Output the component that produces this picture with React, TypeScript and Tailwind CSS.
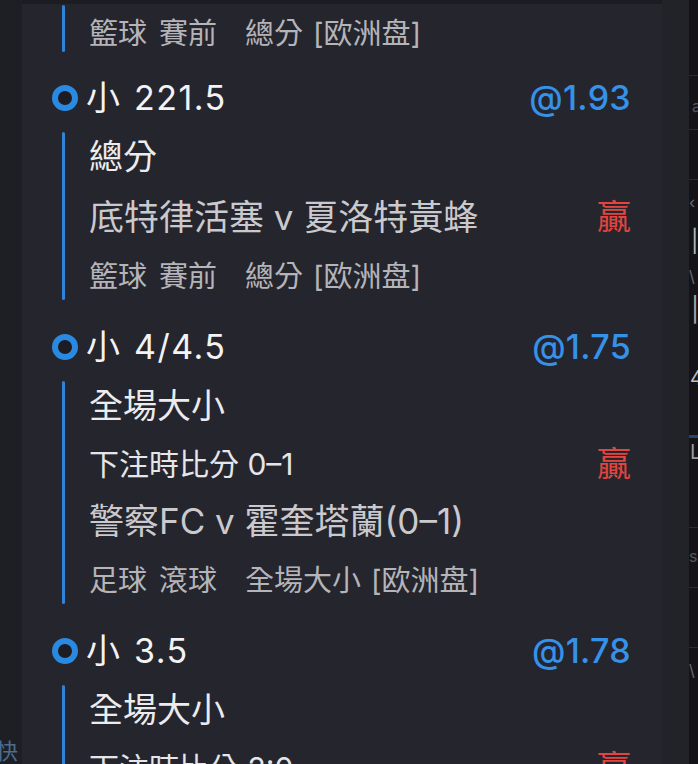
import React from "react";

type Row =
  | { kind: "label"; text: string }
  | { kind: "team"; text: string; win?: boolean }
  | { kind: "score"; text: string; win?: boolean }
  | { kind: "meta"; a: string; b: string; c: string };

type Section = { title: string; num: string; odds: string; rows: Row[] };

const sections: Section[] = [
  {
    title: "小",
    num: "221.5",
    odds: "@1.93",
    rows: [
      { kind: "label", text: "總分" },
      { kind: "team", text: "底特律活塞 v 夏洛特黃蜂", win: true },
      { kind: "meta", a: "籃球", b: "賽前", c: "總分" },
    ],
  },
  {
    title: "小",
    num: "4/4.5",
    odds: "@1.75",
    rows: [
      { kind: "label", text: "全場大小" },
      { kind: "score", text: "下注時比分 0–1", win: true },
      { kind: "team", text: "警察FC v 霍奎塔蘭(0–1)" },
      { kind: "meta", a: "足球", b: "滾球", c: "全場大小" },
    ],
  },
  {
    title: "小",
    num: "3.5",
    odds: "@1.78",
    rows: [
      { kind: "label", text: "全場大小" },
      { kind: "score", text: "下注時比分 2:0", win: true },
      { kind: "team", text: "" },
    ],
  },
];

function Win() {
  return <span className="ml-auto text-[34px] leading-none text-[#e2453f]">贏</span>;
}

function Meta({ a, b, c }: { a: string; b: string; c: string }) {
  return (
    <div className="h-[59px] flex items-center text-[29px] leading-none text-[#b4b4b9]">
      <span>{a}</span>
      <span className="ml-[12px]">{b}</span>
      <span className="ml-[28px]">{c}</span>
      <span className="ml-[10px]">[欧洲盘]</span>
    </div>
  );
}

function RowView({ row }: { row: Row }) {
  if (row.kind === "label")
    return (
      <div className="h-[60px] flex items-center text-[34px] leading-none text-[#ececee]">
        {row.text}
      </div>
    );
  if (row.kind === "team")
    return (
      <div className="h-[60px] flex items-center text-[35px] leading-none text-[#cacace]">
        <span>{row.text}</span>
        {row.win && <Win />}
      </div>
    );
  if (row.kind === "score")
    return (
      <div className="h-[55px] flex items-center text-[30px] leading-none text-[#e6e6e8]">
        <span>{row.text}</span>
        {row.win && <Win />}
      </div>
    );
  return <Meta a={row.a} b={row.b} c={row.c} />;
}

function SectionView({ s }: { s: Section }) {
  return (
    <div className="mt-[12px] flex flex-col">
      <div className="h-[58px] flex items-center pl-[30px]">
        <div className="w-[26px] h-[26px] rounded-full border-[6px] border-[#2a8ae2] bg-[#1c1c22]" />
        <div className="ml-[8px] text-[34px] leading-none text-[#f3f3f5] flex items-center">
          <span>{s.title}</span>
          <span className="ml-[14px] tracking-[1.5px]">{s.num}</span>
        </div>
        <div className="ml-auto text-[34px] leading-none font-medium tracking-[0.3px] text-[#3592e8]">{s.odds}</div>
      </div>
      <div className="flex pl-[40px]">
        <div className="w-[3px] bg-[#2f84da] mt-[5px] mb-[6px] rounded-full" />
        <div className="flex-1 pl-[24px] flex flex-col">
          {s.rows.map((r, i) => (
            <RowView key={i} row={r} />
          ))}
        </div>
      </div>
    </div>
  );
}

export default function App() {
  return (
    <div className="w-[698px] h-[764px] overflow-hidden flex bg-[#1d1e24] font-['Inter','Noto_Sans_CJK_TC',sans-serif]">
      <div className="w-[22px] h-full bg-[#1e1f25] flex flex-col justify-end">
        <div className="h-[24px] text-[22px] leading-none text-[#4d6d8f] -ml-[4px] overflow-hidden">快</div>
      </div>
      <div className="w-[640px] h-full flex flex-col">
        <div className="h-[4px] bg-[#1c1c22]" />
        <div className="flex-1 bg-[#25252d] flex flex-col pr-[31px] overflow-hidden">
          <div className="flex h-[53px] pl-[40px] shrink-0">
            <div className="w-[3px] bg-[#2f84da] mt-[1px] mb-[5px] rounded-full" />
            <div className="pl-[24px] flex-1">
              <Meta a="籃球" b="賽前" c="總分" />
            </div>
          </div>
          {sections.map((s, i) => (
            <SectionView key={i} s={s} />
          ))}
        </div>
      </div>
      <div className="w-[27px] h-full bg-[#222229]" />
      <div className="w-[9px] h-full bg-[#141418] flex flex-col text-[16px] leading-none text-[#8a8a90] overflow-hidden">
        <div className="h-[76px] border-b border-[#2a2a30]" />
        <div className="h-[54px] border-b border-[#2a2a30] pt-[22px] pl-[3px] text-[#55555b]">a</div>
        <div className="h-[50px] border-b border-[#2a2a30]" />
        <div className="h-[50px] pt-[14px] text-[#6a6a70]">‹</div>
        <div className="h-[38px] pl-[2px] text-[22px] text-[#b8b8bc]">|</div>
        <div className="h-[30px] text-[#6a6a70]">\</div>
        <div className="h-[70px] pl-[2px] text-[24px] text-[#a8a8ac]">|</div>
        <div className="h-[50px] pl-[1px] text-[20px] text-[#c0c0c4]">4</div>
        <div className="h-[20px] border-b-[3px] border-[#24466e]" />
        <div className="h-[90px] pt-[4px] pl-[1px] text-[20px] text-[#9a9aa0] border-b border-[#2a2a30]">L</div>
        <div className="h-[60px] border-b border-[#2a2a30] pt-[20px] text-[#55555b]">s</div>
        <div className="h-[60px] border-b border-[#2a2a30]" />
        <div className="h-[40px] pt-[14px] text-[#6a6a70]">\</div>
      </div>
    </div>
  );
}
